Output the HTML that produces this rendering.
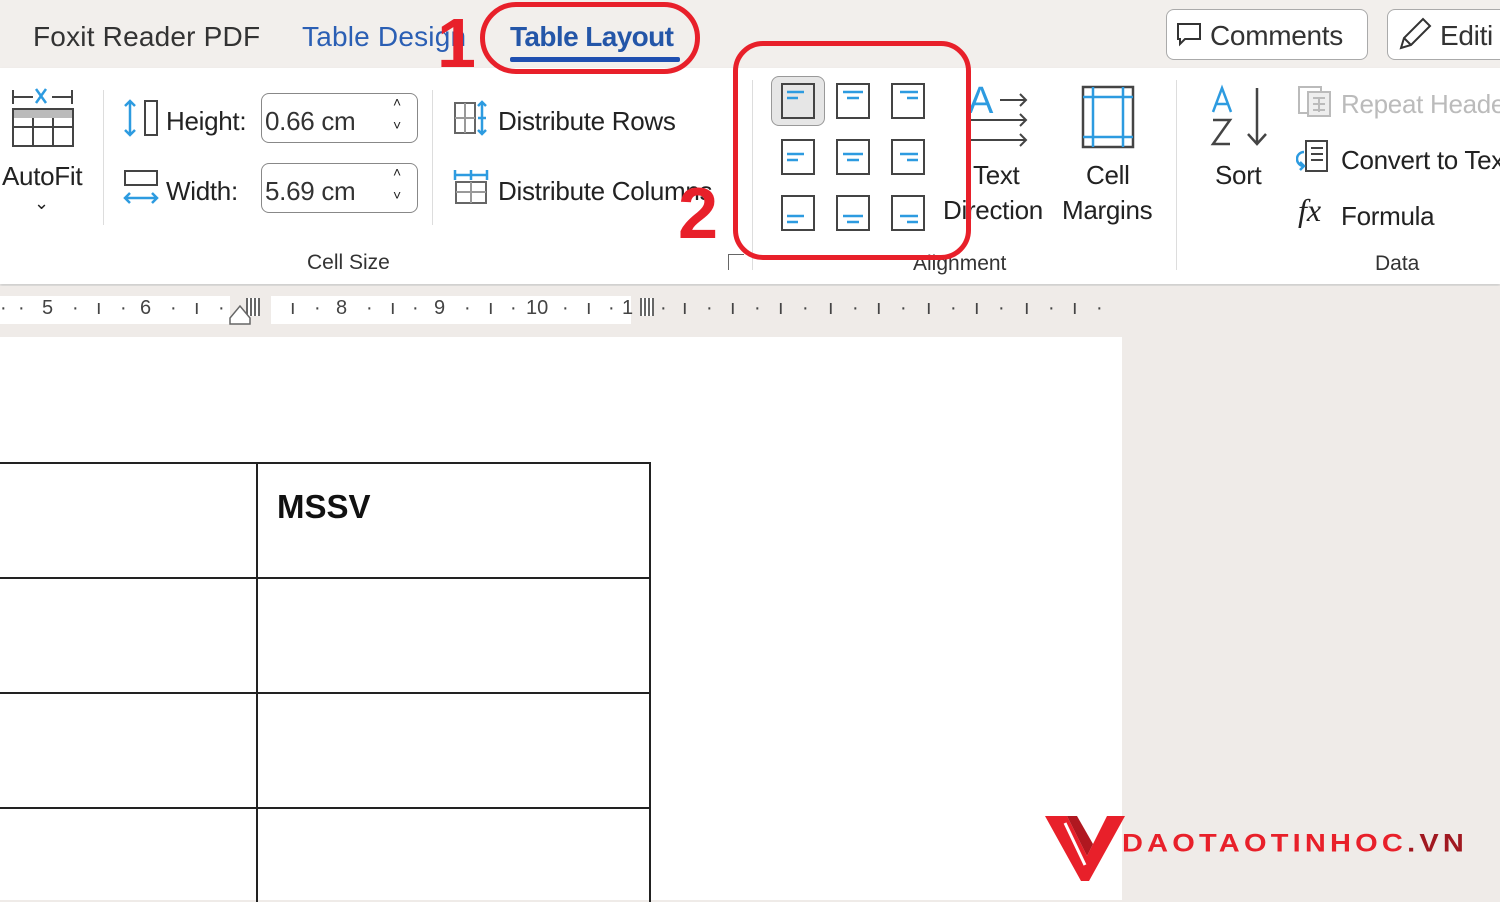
<!DOCTYPE html>
<html><head><meta charset="utf-8"><style>
*{margin:0;padding:0;box-sizing:border-box}
body{width:1500px;height:900px;overflow:hidden;background:#efebe8;font-family:"Liberation Sans",sans-serif;color:#222;position:relative}
.a{position:absolute;white-space:nowrap}
.t{font-size:26px;letter-spacing:-0.3px}
.box{position:absolute;border:1.5px solid #888;border-radius:8px;background:#fff}
.ic{position:absolute}
</style></head><body>
<!-- top bar -->
<div class="a" style="left:0;top:0;width:1500px;height:68px;background:#f2efec"></div>
<div class="a" style="left:33px;top:21px;color:#333;font-size:28px;letter-spacing:0.2px">Foxit Reader PDF</div>
<div class="a" style="left:302px;top:21px;color:#2b5fb4;font-size:28px;letter-spacing:0.2px">Table Design</div>
<div class="a" style="left:510px;top:21px;color:#2456a8;font-weight:bold;font-size:28px;letter-spacing:-0.6px">Table Layout</div>
<div class="a" style="left:510px;top:57px;width:170px;height:5px;background:#1f4fb0;border-radius:2px"></div>
<div class="box" style="left:1166px;top:9px;width:202px;height:51px;border-color:#aaa"></div>
<div class="a t" style="left:1210px;top:20px;color:#333;font-size:28px">Comments</div>
<svg class="ic" style="left:1176px;top:22px" width="26" height="26" viewBox="0 0 26 26"><path d="M2 2h22v15H9l-5 5v-5H2z" fill="none" stroke="#333" stroke-width="2"/></svg>
<div class="box" style="left:1387px;top:9px;width:130px;height:51px;border-color:#aaa"></div>
<div class="a t" style="left:1440px;top:20px;color:#333;font-size:28px">Editi</div>
<svg class="ic" style="left:1397px;top:16px" width="36" height="36" viewBox="0 0 36 36"><path d="M4 32l3-10L26 3l7 7-19 19zM7 22l7 7" fill="none" stroke="#333" stroke-width="2"/></svg>
<!-- ribbon -->
<div class="a" style="left:0;top:68px;width:1500px;height:216px;background:#fff;box-shadow:0 2px 3px #ccc"></div>
<!-- autofit -->
<svg class="ic" style="left:10px;top:84px" width="66" height="66" viewBox="0 0 66 66"><path d="M3 6v14M3 13h20M42 13h20M62 6v14" stroke="#444" stroke-width="2"/><path d="M26 5l10 14M36 5L26 19" stroke="#2d9be0" stroke-width="2.5"/><rect x="3" y="25" width="60" height="9" fill="#bbb"/><path d="M3 25h60v37H3zM3 43h60M23 34v28M43 34v28" fill="none" stroke="#444" stroke-width="2"/></svg>
<div class="a t" style="left:2px;top:161px">AutoFit</div>
<div class="a" style="left:34px;top:193px;font-size:18px">⌄</div>
<div class="a" style="left:103px;top:90px;width:1px;height:135px;background:#ddd"></div>
<!-- height/width -->
<svg class="ic" style="left:122px;top:98px" width="38" height="40" viewBox="0 0 38 40"><path d="M8 3v34M3 8l5-5 5 5M3 32l5 5 5-5" fill="none" stroke="#2d9be0" stroke-width="2.5"/><rect x="23" y="3" width="12" height="34" fill="none" stroke="#444" stroke-width="2"/></svg>
<div class="a t" style="left:166px;top:106px">Height:</div>
<div class="box" style="left:261px;top:93px;width:157px;height:50px"></div>
<div class="a t" style="left:265px;top:106px;color:#333">0.66 cm</div>
<div class="a" style="left:393px;top:94px;font-size:14px">˄</div><div class="a" style="left:393px;top:117px;font-size:14px">˅</div>
<svg class="ic" style="left:122px;top:168px" width="38" height="40" viewBox="0 0 38 40"><rect x="3" y="3" width="32" height="14" fill="none" stroke="#444" stroke-width="2"/><path d="M3 30h32M8 25l-5 5 5 5M30 25l5 5-5 5" fill="none" stroke="#2d9be0" stroke-width="2.5"/></svg>
<div class="a t" style="left:166px;top:176px">Width:</div>
<div class="box" style="left:261px;top:163px;width:157px;height:50px"></div>
<div class="a t" style="left:265px;top:176px;color:#333">5.69 cm</div>
<div class="a" style="left:393px;top:164px;font-size:14px">˄</div><div class="a" style="left:393px;top:187px;font-size:14px">˅</div>
<div class="a" style="left:432px;top:90px;width:1px;height:135px;background:#ddd"></div>
<svg class="ic" style="left:453px;top:100px" width="36" height="36" viewBox="0 0 36 36"><rect x="2" y="3" width="20" height="30" fill="none" stroke="#666" stroke-width="2"/><path d="M2 18h20M12 3v30" stroke="#999" stroke-width="2"/><path d="M29 2v32M25 6l4-4 4 4M25 30l4 4 4-4M25 18h8" fill="none" stroke="#2d9be0" stroke-width="2.5"/></svg>
<div class="a t" style="left:498px;top:106px">Distribute Rows</div>
<svg class="ic" style="left:453px;top:168px" width="36" height="38" viewBox="0 0 36 38"><path d="M2 7h32M2 2v10M34 2v10M18 2v10" fill="none" stroke="#2d9be0" stroke-width="2.5"/><rect x="3" y="14" width="30" height="21" fill="none" stroke="#666" stroke-width="2"/><path d="M18 14v21M3 24h30" stroke="#999" stroke-width="2"/></svg>
<div class="a t" style="left:498px;top:176px">Distribute Columns</div>
<div class="a" style="left:307px;top:251px;font-size:21px;color:#333">Cell Size</div>
<div class="a" style="left:728px;top:254px;width:16px;height:16px;border:1.5px solid #666;border-right:none;border-bottom:none"></div>
<div class="a" style="left:752px;top:80px;width:1px;height:190px;background:#ddd"></div>
<!-- alignment grid -->
<div class="a" style="left:771px;top:76px;width:54px;height:50px;background:#e6e6e6;border:1.5px solid #999;border-radius:8px"></div>
<svg class="ic" style="left:770px;top:80px" width="170" height="154" viewBox="0 0 170 154">
<g fill="none" stroke="#444" stroke-width="2">
<rect x="12" y="4" width="32" height="34"/><rect x="67" y="4" width="32" height="34"/><rect x="122" y="4" width="32" height="34"/>
<rect x="12" y="60" width="32" height="34"/><rect x="67" y="60" width="32" height="34"/><rect x="122" y="60" width="32" height="34"/>
<rect x="12" y="116" width="32" height="34"/><rect x="67" y="116" width="32" height="34"/><rect x="122" y="116" width="32" height="34"/>
</g>
<g stroke="#2d9be0" stroke-width="2.5">
<path d="M17 12h17M17 18h11M73 12h20M77 18h12M130 12h18M137 18h11"/>
<path d="M17 74h17M17 80h11M73 74h20M77 80h12M130 74h18M137 80h11"/>
<path d="M17 136h17M17 142h11M73 136h20M77 142h12M130 136h18M137 142h11"/>
</g></svg>
<!-- text direction -->
<div class="a" style="left:968px;top:80px;font-size:38px;color:#2d9be0">A</div>
<svg class="ic" style="left:968px;top:86px" width="64" height="66" viewBox="0 0 64 66"><path d="M32 14h26M52 8l6 6-6 6M2 34h56M52 28l6 6-6 6M2 54h56M52 48l6 6-6 6" fill="none" stroke="#444" stroke-width="2"/></svg>
<div class="a t" style="left:973px;top:160px">Text</div>
<div class="a t" style="left:943px;top:195px">Direction</div>
<svg class="ic" style="left:1080px;top:84px" width="56" height="66" viewBox="0 0 56 66"><rect x="3" y="3" width="50" height="60" fill="none" stroke="#444" stroke-width="2.5"/><path d="M13 3v60M43 3v60M3 13h50M3 53h50" stroke="#2d9be0" stroke-width="2.5"/></svg>
<div class="a t" style="left:1086px;top:160px">Cell</div>
<div class="a t" style="left:1062px;top:195px">Margins</div>
<div class="a" style="left:913px;top:252px;font-size:21px;color:#333">Alignment</div>
<div class="a" style="left:1176px;top:80px;width:1px;height:190px;background:#ddd"></div>
<!-- sort -->
<svg class="ic" style="left:1208px;top:84px" width="66" height="66" viewBox="0 0 66 66"><path d="M5 28L14 4l9 24M8 20h12" fill="none" stroke="#2d9be0" stroke-width="2.5"/><path d="M5 36h17L5 60h17" fill="none" stroke="#444" stroke-width="2.5"/><path d="M49 4v56M40 50l9 10 9-10" fill="none" stroke="#444" stroke-width="2.5"/></svg>
<div class="a t" style="left:1215px;top:160px">Sort</div>
<svg class="ic" style="left:1296px;top:84px" width="38" height="36" viewBox="0 0 38 36"><rect x="3" y="3" width="22" height="26" fill="none" stroke="#bbb" stroke-width="2"/><rect x="12" y="8" width="22" height="24" fill="#eee" stroke="#bbb" stroke-width="2"/><path d="M17 14h12M17 20h12M17 26h12M23 14v14" stroke="#bbb" stroke-width="2"/></svg>
<div class="a t" style="left:1341px;top:89px;color:#bbb">Repeat Header</div>
<svg class="ic" style="left:1296px;top:138px" width="36" height="38" viewBox="0 0 36 38"><rect x="10" y="3" width="21" height="30" fill="none" stroke="#444" stroke-width="2"/><path d="M15 10h12M15 16h12M15 22h12" stroke="#444" stroke-width="2"/><path d="M8 14a7 7 0 0 0 0 14M4 24l4 4-4 4" fill="none" stroke="#2d9be0" stroke-width="2.5"/></svg>
<div class="a t" style="left:1341px;top:145px">Convert to Text</div>
<div class="a" style="left:1298px;top:192px;font-size:32px;font-style:italic;font-family:'Liberation Serif',serif">fx</div>
<div class="a t" style="left:1341px;top:201px">Formula</div>
<div class="a" style="left:1375px;top:252px;font-size:21px;color:#333">Data</div>
<!-- ruler -->
<div class="a" style="left:0;top:286px;width:1500px;height:50px;background:#efebe8"></div>
<div class="a" style="left:0;top:296px;width:230px;height:28px;background:#fff"></div>
<div class="a" style="left:271px;top:296px;width:360px;height:28px;background:#fff"></div>
<div class="a" style="left:0;top:297px;font-size:20px;color:#444;letter-spacing:0">
<span class="a" style="left:0">·</span><span class="a" style="left:18px">·</span><span class="a" style="left:42px">5</span><span class="a" style="left:72px">·</span><span class="a" style="left:96px">ı</span><span class="a" style="left:120px">·</span><span class="a" style="left:140px">6</span><span class="a" style="left:170px">·</span><span class="a" style="left:194px">ı</span><span class="a" style="left:218px">·</span>
<span class="a" style="left:290px">ı</span><span class="a" style="left:314px">·</span><span class="a" style="left:336px">8</span><span class="a" style="left:366px">·</span><span class="a" style="left:390px">ı</span><span class="a" style="left:412px">·</span><span class="a" style="left:434px">9</span><span class="a" style="left:464px">·</span><span class="a" style="left:488px">ı</span><span class="a" style="left:510px">·</span><span class="a" style="left:526px">10</span><span class="a" style="left:562px">·</span><span class="a" style="left:586px">ı</span><span class="a" style="left:608px">·</span><span class="a" style="left:622px">1</span>
<span class="a" style="left:660px">·</span><span class="a" style="left:682px">ı</span><span class="a" style="left:706px">·</span><span class="a" style="left:730px">ı</span><span class="a" style="left:754px">·</span><span class="a" style="left:778px">ı</span><span class="a" style="left:802px">·</span><span class="a" style="left:828px">ı</span><span class="a" style="left:852px">·</span><span class="a" style="left:876px">ı</span><span class="a" style="left:900px">·</span><span class="a" style="left:926px">ı</span><span class="a" style="left:950px">·</span><span class="a" style="left:974px">ı</span><span class="a" style="left:998px">·</span><span class="a" style="left:1024px">ı</span><span class="a" style="left:1048px">·</span><span class="a" style="left:1072px">ı</span><span class="a" style="left:1096px">·</span>
</div>
<div class="a" style="left:246px;top:298px;width:14px;height:18px;background:repeating-linear-gradient(90deg,#666 0 2px,#fff 2px 4px)"></div>
<div class="a" style="left:640px;top:298px;width:14px;height:18px;background:repeating-linear-gradient(90deg,#666 0 2px,#fff 2px 4px)"></div>
<svg class="ic" style="left:228px;top:304px" width="28" height="22" viewBox="0 0 28 22"><path d="M2 20V14l10-12 10 12v6z" fill="#fff" stroke="#666" stroke-width="1.5"/></svg>
<!-- page -->
<div class="a" style="left:0;top:337px;width:1122px;height:563px;background:#fff"></div>
<div class="a" style="left:0;top:462px;width:651px;height:440px;border:2px solid #222;border-left:none;border-bottom:none"></div>
<div class="a" style="left:256px;top:462px;width:2px;height:440px;background:#222"></div>
<div class="a" style="left:0;top:577px;width:651px;height:2px;background:#222"></div>
<div class="a" style="left:0;top:692px;width:651px;height:2px;background:#222"></div>
<div class="a" style="left:0;top:807px;width:651px;height:2px;background:#222"></div>
<div class="a" style="left:277px;top:488px;font-size:33px;font-weight:bold;color:#111">MSSV</div>
<!-- logo -->
<svg class="ic" style="left:1045px;top:813px" width="80" height="70" viewBox="0 0 80 70"><path d="M0 3h22l20 40L62 3h18L44 68h-8z" fill="#e8202a"/><path d="M22 3l20 40 6-12L32 3z" fill="#b01820"/><path d="M20 10l20 42" stroke="#fff" stroke-width="3"/></svg>
<div class="a" style="left:1122px;top:828px;font-size:29px;color:#e8202a;letter-spacing:4.2px;transform:scaleY(0.85);font-weight:bold">DAOTAOTINHOC<span style="color:#a01820">.VN</span></div>
<!-- red annotations -->
<div class="a" style="left:480px;top:2px;width:220px;height:72px;border:5px solid #e8202a;border-radius:36px"></div>
<div class="a" style="left:437px;top:8px;font-size:70px;font-weight:bold;color:#e8202a;line-height:1">1</div>
<div class="a" style="left:733px;top:41px;width:238px;height:219px;border:5px solid #e8202a;border-radius:30px"></div>
<div class="a" style="left:678px;top:178px;font-size:72px;font-weight:bold;color:#e8202a;line-height:1">2</div>
</body></html>
